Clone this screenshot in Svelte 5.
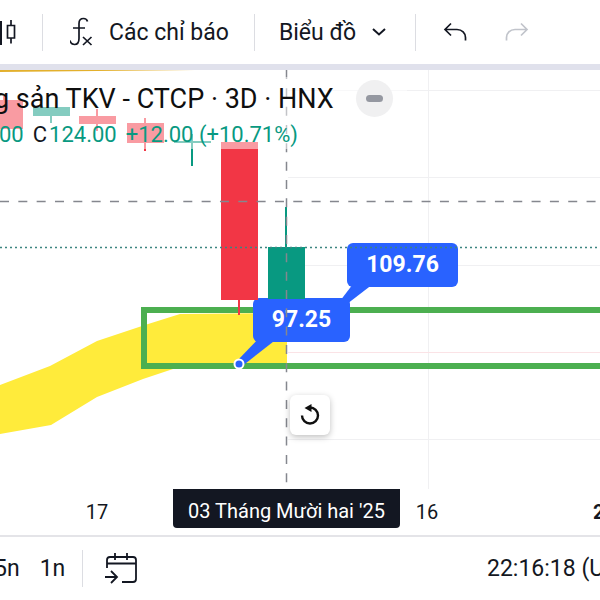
<script>
    // y values are measured from the top of the chart pane
    const gridRows = [20, 107, 195, 282, 369];

    const candles = [
        { x: 4, top: 30, bottom: 59, high: 26, low: 59, up: false },
        { x: 51, top: 37, bottom: 46, high: 37, low: 53, up: true },
        { x: 97, top: 46, bottom: 54, high: 39, low: 61, up: false },
        { x: 145, top: 53, bottom: 73, high: 48, low: 81, up: false },
        { x: 192, top: 71, bottom: 73, high: 64, low: 96, up: true },
        { x: 239, top: 72, bottom: 230, high: 72, low: 245, up: false },
        { x: 286, top: 177, bottom: 229, high: 137, low: 229, up: true }
    ];
    const bodyWidth = 37;

    const cloud = '0,315 50,296 97,271 145,255 180,244 287,243 287,294 188,294 143,309 97,327 51,355 0,364';

    const callouts = [
        { x: 347, y: 173, width: 111, value: '109.76', tail: '353,214 373,214 347,234 340,231' },
        { x: 253, y: 228, width: 97, value: '97.25', tail: '259,268 278,268 241,297 236,292' }
    ];

    const ticks = [
        { x: 97, label: '17' },
        { x: 427, label: '16' },
        { x: 616, label: '2026', strong: true }
    ];
</script>

<div class="app">
    <header class="toolbar">
        <button class="style" aria-label="Candles">
            <svg width="18" height="30" viewBox="0 0 18 30" fill="none" stroke="#131722" stroke-width="2">
                <path d="M1 4v24" />
                <path d="M11 3v5.500M11 21v5.500M7.500 8.500h7v12.500h-7z" stroke-width="1.700" />
            </svg>
        </button>
        <span class="divider"></span>
        <button class="indicators">
            <svg width="24" height="30" viewBox="0 0 24 30" fill="none" stroke="#131722" stroke-width="1.700">
                <path d="M17.500 4.500c-.5-2-2-3-4-3-3 0-4.500 2-4.500 5v15c0 4-1.500 6-4.500 6-2.500 0-4-1.500-4.500-4" />
                <path d="M3 11h12M13 20l8.500 8M21.500 20L13 28" />
            </svg>
            Các chỉ báo
        </button>
        <span class="divider"></span>
        <button class="layout">
            Biểu đồ
            <svg width="14" height="10" viewBox="0 0 14 10" fill="none" stroke="#131722" stroke-width="2">
                <path d="M1 2l6 5.500L13 2" />
            </svg>
        </button>
        <span class="divider"></span>
        <button class="undo" aria-label="Undo">
            <svg width="24" height="20" viewBox="0 0 24 20" fill="none" stroke="#131722" stroke-width="1.700">
                <path d="M8 1.500L2 7.500l6 6M2 7.500h12c5 0 8.500 3.500 8.500 8v3" />
            </svg>
        </button>
        <button class="redo" aria-label="Redo" disabled>
            <svg width="24" height="20" viewBox="0 0 24 20" fill="none" stroke="#c1c4cb" stroke-width="1.700">
                <path d="M16 1.500l6 6-6 6M22 7.500H10c-5 0-8.500 3.500-8.500 8v3" />
            </svg>
        </button>
    </header>

    <main class="pane">
        <svg class="chart" width="100%" height="419">
            <line x1="428" x2="428" y1="0" y2="419" class="grid" />
            {#each gridRows as y}
                <line x1="288" x2="100%" y1={y} y2={y} class="grid" class:pink={y === 282} />
            {/each}
            <polygon points="0,0 195,0 0,2" fill="#e3b02c" />
            <polygon points={cloud} fill="#ffeb3b" />
            <rect x="144" y="240" width="120%" height="56" class="zone" />

            {#each callouts as c}
                <g class="callout">
                    <polygon points={c.tail} />
                    <rect x={c.x} y={c.y} width={c.width} height="44" rx="6" />
                    <text x={c.x + c.width / 2} y={c.y + 29}>{c.value}</text>
                </g>
            {/each}
            <circle cx="239" cy="294" r="4.500" class="anchor" />

            {#each candles as c}
                <g class={c.up ? 'up' : 'down'}>
                    <rect x={c.x - 18} y={c.top} width={bodyWidth} height={c.bottom - c.top} />
                    <rect x={c.x - 1} y={c.high} width="2" height={c.low - c.high} />
                </g>
            {/each}

            <line x1="0" x2="100%" y1="177.500" y2="177.500" class="price" />
            <line x1="0" x2="100%" y1="131.500" y2="131.500" class="cross" />
            <line x1="286.500" x2="286.500" y1="0" y2="419" class="cross" />
        </svg>

        <div class="legend">
            <div class="title">
                <span>g sản TKV - CTCP · 3D · HNX</span>
                <button class="more" aria-label="Market status"><i></i></button>
            </div>
            <div class="values">
                <span>00</span>
                <span class="close"><b>C</b>124.00</span>
                <span>+12.00 (+10.71%)</span>
            </div>
        </div>

        <button class="reset" aria-label="Reset chart">
            <svg width="22" height="24" viewBox="0 0 22 24" fill="none">
                <path d="M3 12.500a8 8 0 1 0 8-8" stroke="#0f0f0f" stroke-width="2.400" />
                <path d="M5.500 5L12.500 1v8z" fill="#0f0f0f" />
            </svg>
        </button>
    </main>

    <div class="axis">
        {#each ticks as t}
            <span class="tick" class:strong={t.strong} style="left: {t.x}px">{t.label}</span>
        {/each}
        <span class="date">03 Tháng Mười hai '25</span>
    </div>

    <footer class="bottom">
        <button class="range">5n</button>
        <button class="range">1n</button>
        <span class="divider"></span>
        <button class="goto" aria-label="Go to date">
            <svg width="34" height="32" viewBox="0 0 34 32" fill="none" stroke="#131722" stroke-width="1.800">
                <path d="M3 15V7q0-3 3-3h23q3 0 3 3v19q0 3-3 3H18M3 10.500h29M11 0v7M23 0v7" />
                <path d="M1 24h12M7 18l6 6-6 6" />
            </svg>
        </button>
        <button class="clock">22:16:18 (UTC+7)</button>
    </footer>
</div>

<style>
    :global(body) {
        margin: 0;
        background: #fff;
    }

    .app {
        overflow: hidden;
        font-family: Roboto, "Noto Sans", sans-serif;
        font-size: 23px;
        color: #131722;
    }

    button {
        display: flex;
        align-items: center;
        padding: 0;
        border: 0;
        background: none;
        font: inherit;
        color: inherit;
        white-space: nowrap;
        flex-shrink: 0;
    }

    svg {
        display: block;
        flex-shrink: 0;
    }

    .toolbar {
        display: flex;
        align-items: center;
        height: 64px;
        border-bottom: 6px solid #e0e1ec;
    }

    .divider {
        width: 1px;
        height: 37px;
        background: #dcdde2;
        flex-shrink: 0;
    }

    .style {
        width: 42px;
    }

    .indicators {
        gap: 15px;
        padding: 0 25px 0 27px;
    }

    .layout {
        gap: 16px;
        padding: 0 29px 0 24px;
    }

    .undo {
        padding-left: 27px;
    }

    .redo {
        padding-left: 38px;
    }

    .pane {
        position: relative;
    }

    .grid {
        stroke: #f0f0f2;
        stroke-width: 1;
        shape-rendering: crispEdges;
    }

    .grid.pink {
        stroke: #fbe3e6;
    }

    .zone {
        fill: none;
        stroke: #4caf50;
        stroke-width: 6;
    }

    .up {
        fill: #089981;
    }

    .down {
        fill: #f23645;
    }

    .callout {
        fill: #2962ff;
    }

    .callout text {
        fill: #fff;
        font-size: 23px;
        font-weight: 700;
        text-anchor: middle;
    }

    .anchor {
        fill: #2962ff;
        stroke: #fff;
        stroke-width: 2;
    }

    .cross {
        stroke: #85878e;
        stroke-width: 1.5;
        stroke-dasharray: 9 9.33;
    }

    .price {
        stroke: #3c8580;
        stroke-width: 1.5;
        stroke-dasharray: 2 3;
    }

    .legend {
        position: absolute;
        top: 7px;
        left: 0;
        height: 72px;
        padding-right: 14px;
        background: rgba(255, 255, 255, 0.5);
        white-space: nowrap;
    }

    .title {
        display: flex;
        align-items: center;
        gap: 22px;
        height: 43px;
        margin-left: -6px;
        font-size: 27px;
        color: #0f0f0f;
    }

    .more {
        justify-content: center;
        width: 37px;
        height: 37px;
        border-radius: 50%;
        background: #f0f0f1;
    }

    .more i {
        width: 17px;
        height: 7px;
        border-radius: 4px;
        background: #9598a1;
    }

    .values {
        display: flex;
        gap: 9px;
        margin-left: -1px;
        line-height: 29px;
        font-size: 22px;
        color: #089981;
    }

    .close b {
        margin-right: 2px;
        font-weight: 400;
        color: #131722;
    }

    .reset {
        position: absolute;
        top: 325px;
        left: 290px;
        justify-content: center;
        width: 40px;
        height: 40px;
        border-radius: 6px;
        background: #fff;
        box-shadow: 0 2px 6px rgba(0, 0, 0, 0.25);
    }

    .axis {
        position: relative;
        height: 46px;
        border-bottom: 2px solid #e4e4e8;
        font-size: 20px;
        line-height: 46px;
    }

    .tick {
        position: absolute;
        transform: translateX(-50%);
    }

    .strong {
        font-weight: 700;
    }

    .date {
        position: absolute;
        left: 173px;
        padding: 6px 15px 0;
        border-radius: 0 0 4px 4px;
        background: #131722;
        color: #fff;
        line-height: 33px;
        white-space: nowrap;
    }

    .bottom {
        display: flex;
        align-items: center;
        height: 63px;
    }

    .range {
        margin-right: 17px;
    }

    .range:first-child {
        margin-left: -6px;
        margin-right: 20px;
    }

    .goto {
        margin-left: 21px;
    }

    .clock {
        width: 113px;
        margin-left: auto;
        overflow: hidden;
    }
</style>
